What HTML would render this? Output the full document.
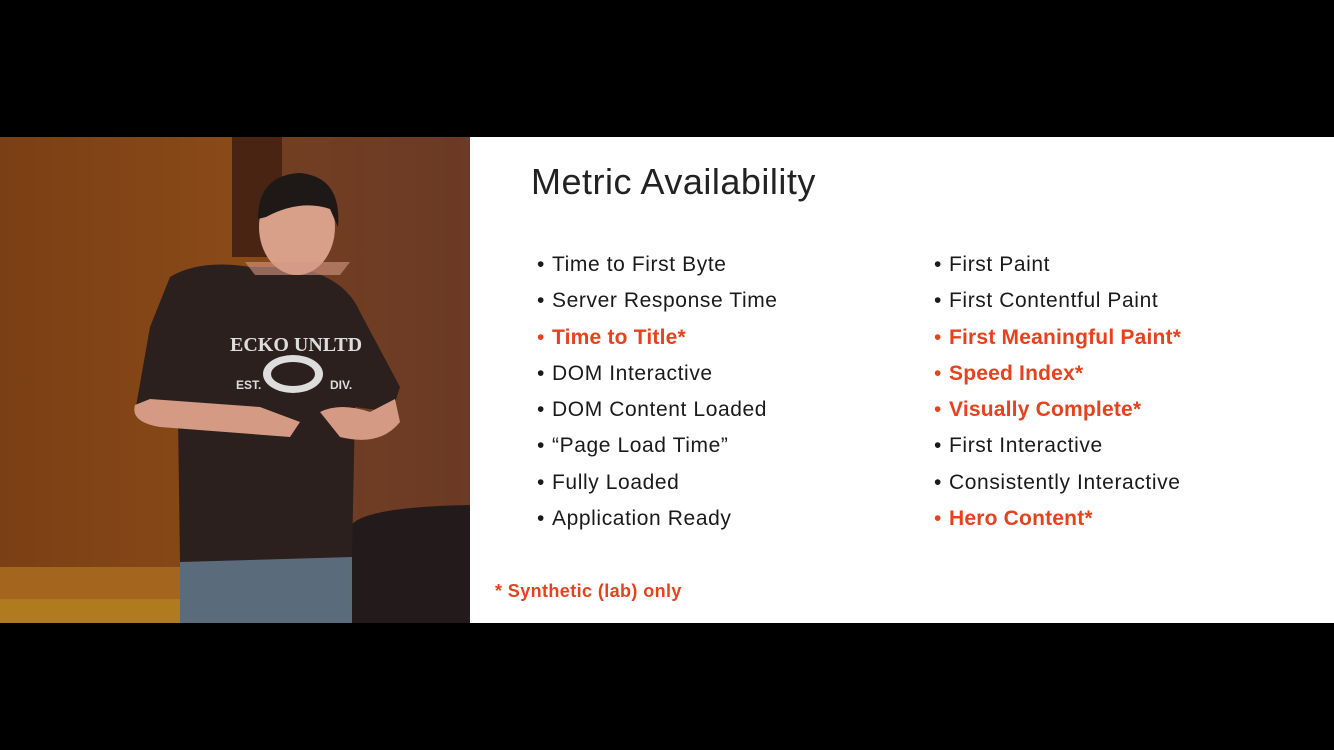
<!DOCTYPE html>
<html><head><style>
body{margin:0;width:1334px;height:750px;background:#000;overflow:hidden;position:relative;font-family:"Liberation Sans",sans-serif}
#slide{position:absolute;left:470px;top:137px;width:864px;height:486px;background:#fff}
h1{position:absolute;left:61px;top:24px;margin:0;font-weight:normal;font-size:36px;color:#222;letter-spacing:0.5px}
.it{position:absolute;font-size:21px;color:#1a1a1a;white-space:nowrap;letter-spacing:0.6px}
.it b{position:absolute;left:-15px;font-weight:normal}
.r{color:#e8411c;font-weight:bold;letter-spacing:0.2px}
.note{position:absolute;left:25px;top:444px;font-size:18px;color:#e8411c;font-weight:bold;letter-spacing:0.4px}
</style></head><body>
<svg style="position:absolute;left:0;top:137px" width="470" height="486" viewBox="0 0 470 486">
<defs><linearGradient id="w" x1="0" x2="1"><stop offset="0" stop-color="#7a3f14"/><stop offset="0.5" stop-color="#8a4a18"/><stop offset="1" stop-color="#6e3a22"/></linearGradient></defs>
<rect width="470" height="486" fill="url(#w)"/>
<rect x="232" y="0" width="50" height="120" fill="#4a2412"/>
<rect x="282" y="0" width="188" height="486" fill="#6b3a26" opacity="0.7"/>
<rect x="0" y="430" width="190" height="56" fill="#a4661e"/>
<rect x="0" y="462" width="190" height="24" fill="#b07a1f"/>
<path d="M350 390 Q360 370 470 368 L470 486 L350 486Z" fill="#231b1b"/>
<path d="M180 420 L352 420 L352 486 L180 486Z" fill="#5a6c7c"/>
<path d="M170 140 Q200 122 250 130 L295 130 Q345 140 360 175 L400 250 L392 275 L355 270 L352 420 L180 425 L178 280 L135 275 L150 190Z" fill="#2b201e"/>
<path d="M135 268 Q130 285 160 290 L290 300 L300 285 L260 270 L150 262Z" fill="#d59a84"/>
<path d="M320 275 Q340 265 370 275 L395 262 L400 285 Q380 310 340 300Z" fill="#d59a84"/>
<ellipse cx="297" cy="90" rx="38" ry="48" fill="#d89f89"/>
<path d="M258 82 Q258 38 300 36 Q342 40 338 90 L330 72 Q300 62 266 80Z" fill="#1e1816"/>
<path d="M245 125 L350 125 L340 138 L255 138Z" fill="#d59a84" opacity="0.6"/>
<ellipse cx="293" cy="237" rx="30" ry="19" fill="#ddd"/>
<ellipse cx="293" cy="237" rx="22" ry="12" fill="#2b201e"/>
<text x="230" y="214" font-size="20" font-weight="bold" fill="#ddd" font-family="Liberation Serif">ECKO UNLTD</text>
<text x="236" y="252" font-size="12" font-weight="bold" fill="#ddd">EST.</text>
<text x="330" y="252" font-size="12" font-weight="bold" fill="#ddd">DIV.</text>
</svg>
<div id="slide">
<h1>Metric Availability</h1>
<div class="it" style="left:82px;top:116px"><b>•</b>Time to First Byte</div>
<div class="it" style="left:82px;top:152px"><b>•</b>Server Response Time</div>
<div class="it r" style="left:82px;top:189px"><b>•</b>Time to Title*</div>
<div class="it" style="left:82px;top:225px"><b>•</b>DOM Interactive</div>
<div class="it" style="left:82px;top:261px"><b>•</b>DOM Content Loaded</div>
<div class="it" style="left:82px;top:297px"><b>•</b>“Page Load Time”</div>
<div class="it" style="left:82px;top:334px"><b>•</b>Fully Loaded</div>
<div class="it" style="left:82px;top:370px"><b>•</b>Application Ready</div>
<div class="it" style="left:479px;top:116px"><b>•</b>First Paint</div>
<div class="it" style="left:479px;top:152px"><b>•</b>First Contentful Paint</div>
<div class="it r" style="left:479px;top:189px"><b>•</b>First Meaningful Paint*</div>
<div class="it r" style="left:479px;top:225px"><b>•</b>Speed Index*</div>
<div class="it r" style="left:479px;top:261px"><b>•</b>Visually Complete*</div>
<div class="it" style="left:479px;top:297px"><b>•</b>First Interactive</div>
<div class="it" style="left:479px;top:334px"><b>•</b>Consistently Interactive</div>
<div class="it r" style="left:479px;top:370px"><b>•</b>Hero Content*</div>
<div class="note">* Synthetic (lab) only</div>
</div>
</body></html>
